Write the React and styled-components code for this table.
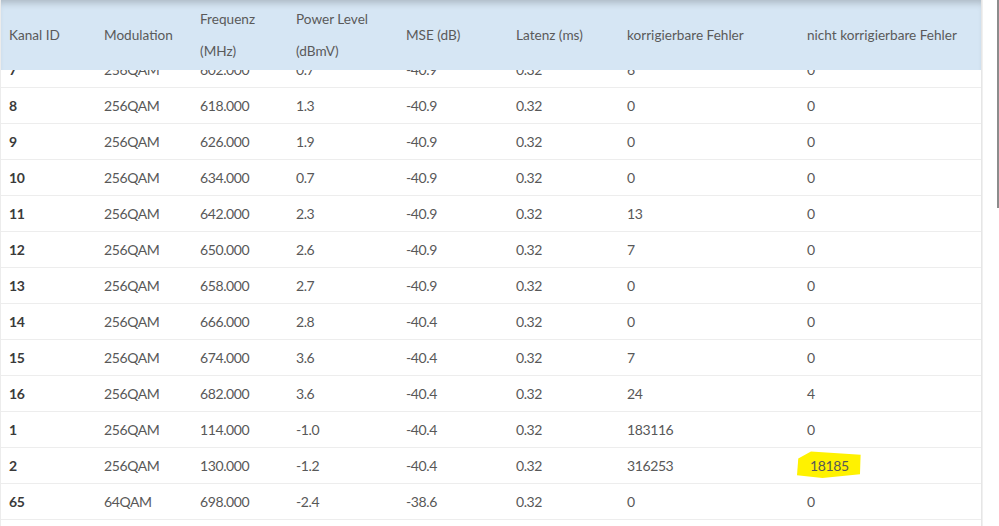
import React from "react";
import styled, {createGlobalStyle} from "styled-components";

const GlobalStyle = createGlobalStyle`
  html, body {
    margin: 0;
    padding: 0;
    background: #fff;
    overflow: hidden;
  }
  body {
    font-family: Lato, "Noto Sans", sans-serif;
  }
`;

const columns = "95px 96px 96px 110px 110px 111px 180px 1fr";

const Page = styled.div`
  display: flex;
  width: 999px;
  height: 526px;
  overflow: hidden;
`;

const TableWrap = styled.div`
  width: 982px;
  border-left: 1px solid #ececec;
  border-right: 1px solid #e6e6e6;
  box-sizing: border-box;
  display: flex;
  flex-direction: column;
`;

const ScrollTrack = styled.div`
  flex: 1;
  display: flex;
  justify-content: flex-end;
  border-left: 1px solid #f0f0f0;
`;

const ScrollThumb = styled.div`
  width: 2px;
  height: 208px;
  background: #8c8c8c;
`;

const HeaderRow = styled.div`
  position: relative;
  z-index: 1;
  display: grid;
  grid-template-columns: ${columns};
  align-items: center;
  height: 70px;
  background: #d6e6f4;
  box-shadow: inset 0 7px 7px -4px rgba(0, 0, 0, 0.2);
`;

const HeadCell = styled.div`
  padding-left: 8px;
  font-size: 13.6px;
  line-height: 32px;
  color: #5a5a5a;
`;

const Body = styled.div`
  margin-top: -18px;
`;

const Row = styled.div`
  display: grid;
  grid-template-columns: ${columns};
  align-items: center;
  height: 35px;
  border-bottom: 1px solid #ededed;
`;

const Cell = styled.div`
  padding-left: 8px;
  font-size: 14px;
  letter-spacing: -0.4px;
  color: #585858;
  font-weight: ${({bold}) => (bold ? 700 : 400)};
  ${({bold}) => bold && "color: #3a3a3a;"}
`;

const Marker = styled.span`
  position: relative;
  display: inline-block;

  &::before {
    content: "";
    position: absolute;
    left: -13px;
    right: -12px;
    top: -6px;
    bottom: -4px;
    background: #fff200;
    clip-path: polygon(2% 28%, 22% 2%, 100% 14%, 99% 86%, 40% 100%, 0% 90%);
    z-index: -1;
  }
`;

const MarkedCell = styled(Cell)`
  position: relative;
  z-index: 0;
  padding-left: 11px;
`;

const rows = [
  ["7", "256QAM", "602.000", "0.7", "-40.9", "0.32", "6", "0"],
  ["8", "256QAM", "618.000", "1.3", "-40.9", "0.32", "0", "0"],
  ["9", "256QAM", "626.000", "1.9", "-40.9", "0.32", "0", "0"],
  ["10", "256QAM", "634.000", "0.7", "-40.9", "0.32", "0", "0"],
  ["11", "256QAM", "642.000", "2.3", "-40.9", "0.32", "13", "0"],
  ["12", "256QAM", "650.000", "2.6", "-40.9", "0.32", "7", "0"],
  ["13", "256QAM", "658.000", "2.7", "-40.9", "0.32", "0", "0"],
  ["14", "256QAM", "666.000", "2.8", "-40.4", "0.32", "0", "0"],
  ["15", "256QAM", "674.000", "3.6", "-40.4", "0.32", "7", "0"],
  ["16", "256QAM", "682.000", "3.6", "-40.4", "0.32", "24", "4"],
  ["1", "256QAM", "114.000", "-1.0", "-40.4", "0.32", "183116", "0"],
  ["2", "256QAM", "130.000", "-1.2", "-40.4", "0.32", "316253", "18185"],
  ["65", "64QAM", "698.000", "-2.4", "-38.6", "0.32", "0", "0"],
];

const headers = [
  ["Kanal ID"],
  ["Modulation"],
  ["Frequenz", "(MHz)"],
  ["Power Level", "(dBmV)"],
  ["MSE (dB)"],
  ["Latenz (ms)"],
  ["korrigierbare Fehler"],
  ["nicht korrigierbare Fehler"],
];

const App = () => (
  <Page>
    <GlobalStyle />
    <TableWrap>
      <HeaderRow>
        {headers.map(lines => (
          <HeadCell key={lines[0]}>
            {lines.map(line => (
              <div key={line}>{line}</div>
            ))}
          </HeadCell>
        ))}
      </HeaderRow>
      <Body>
        {rows.map(row => (
          <Row key={row[0]}>
            {row.map((value, i) =>
              i === 7 && value === "18185" ? (
                <MarkedCell key={i}>
                  <Marker>{value}</Marker>
                </MarkedCell>
              ) : (
                <Cell key={i} bold={i === 0}>
                  {value}
                </Cell>
              )
            )}
          </Row>
        ))}
      </Body>
    </TableWrap>
    <ScrollTrack>
      <ScrollThumb />
    </ScrollTrack>
  </Page>
);

export default App;
